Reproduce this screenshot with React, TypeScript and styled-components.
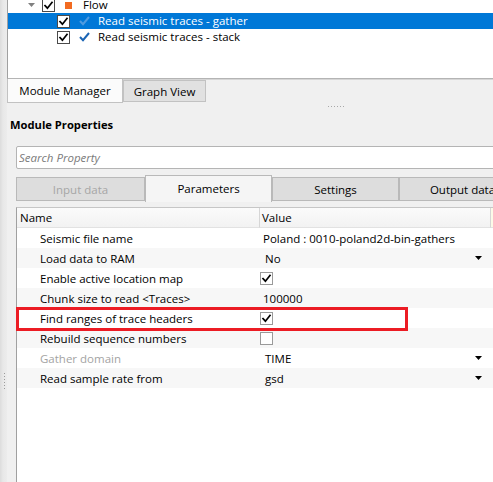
import React from "react";
import styled, { createGlobalStyle } from "styled-components";

const GlobalStyle = createGlobalStyle`
  html, body { margin: 0; padding: 0; background: #f0f0f0; }
  body { font-family: "Open Sans", "Noto Sans", sans-serif; font-size: 11.5px; color: #000; }
  * { box-sizing: border-box; }
`;

const Root = styled.div`
  width: 493px;
  height: 482px;
  overflow: hidden;
  display: flex;
  background: #f0f0f0;
`;

const SideGrip = styled.div`
  width: 7px;
  flex: none;
  background: linear-gradient(to right, #dcdcdc 0, #e8e8e8 3px, #ececec 7px);
  display: flex;
  flex-direction: column;
  align-items: center;
  padding-top: 373px;
  padding-left: 1px;
`;

const GripDots = styled.div`
  width: 1px;
  height: 18px;
  background-image: linear-gradient(to bottom, #9a9a9a 1px, transparent 1px);
  background-size: 1px 3px;
`;

const Main = styled.div`
  width: 620px;
  flex: none;
  display: flex;
  flex-direction: column;
`;

const TreePanel = styled.div`
  height: 79px;
  flex: none;
  background: #fff;
  border-left: 1px solid #a0a0a0;
  border-bottom: 1px solid #b4b4b4;
  box-shadow: 0 1px 0 #d6d6d6;
  overflow: hidden;
`;

const TreeList = styled.div`
  margin-top: -3px;
  display: flex;
  flex-direction: column;
`;

const TreeRow = styled.div<{ $selected?: boolean }>`
  height: 16px;
  display: flex;
  align-items: center;
  background: ${(p) => (p.$selected ? "#0078d7" : "transparent")};
  color: ${(p) => (p.$selected ? "#fff" : "#000")};
`;

const Indent = styled.div<{ $level: number }>`
  flex: none;
  width: ${(p) => 20 + p.$level * 15}px;
`;

const ArrowSlot = styled.div`
  flex: none;
  width: 14px;
  display: flex;
  align-items: center;
`;

const Check = styled.div<{ $dark?: boolean }>`
  flex: none;
  width: 13px;
  height: 13px;
  background: #fff;
  border: 1px solid ${(p) => (p.$dark ? "#4a4a4a" : "#9a9a9a")};
  display: flex;
  align-items: center;
  justify-content: center;
`;

const IconSlot = styled.div`
  flex: none;
  width: 28px;
  padding-left: 9px;
  display: flex;
  align-items: center;
`;

const FlowIcon = styled.div`
  width: 7px;
  height: 7px;
  margin-left: 1px;
  background: #f26b21;
`;

const TreeLabel = styled.span`
  white-space: nowrap;
  line-height: 16px;
`;

const DockTabs = styled.div`
  height: 24px;
  flex: none;
  display: flex;
  align-items: flex-start;
`;

const DockTab = styled.div<{ $active?: boolean; $w: number }>`
  width: ${(p) => p.$w}px;
  height: ${(p) => (p.$active ? 24 : 22)}px;
  margin-top: ${(p) => (p.$active ? 0 : 1)}px;
  background: ${(p) => (p.$active ? "#fbfbfb" : "#e1e1e1")};
  border: 1px solid #c2c2c2;
  border-top: ${(p) => (p.$active ? "none" : "1px solid #c2c2c2")};
  display: flex;
  align-items: center;
  justify-content: center;
  white-space: nowrap;
`;

const Splitter = styled.div`
  height: 10px;
  flex: none;
  padding: 3px 0 0 321px;
`;

const HDots = styled.div`
  width: 17px;
  height: 1px;
  background-image: linear-gradient(to right, #a8a8a8 1px, transparent 1px);
  background-size: 3px 1px;
`;

const Title = styled.div`
  margin-top: 4px;
  padding-left: 3px;
  height: 16px;
  line-height: 16px;
  font-weight: 700;
  font-size: 11.2px;
`;

const Body = styled.div`
  flex: 1;
  display: flex;
  flex-direction: column;
  padding-left: 9px;
`;

const Search = styled.input`
  margin-top: 13px;
  height: 23px;
  width: 100%;
  border: 1px solid #b4b4b4;
  border-radius: 2px;
  background: #fff;
  padding: 0 2px;
  font-family: inherit;
  font-size: 11.5px;
  outline: none;
  &::placeholder {
    font-style: italic;
    color: #7a7a7a;
  }
`;

const TabBar = styled.div`
  margin-top: 6px;
  height: 26px;
  flex: none;
  display: flex;
  align-items: flex-end;
`;

const Tab = styled.div<{ $active?: boolean; $disabled?: boolean; $w: number }>`
  width: ${(p) => p.$w}px;
  flex: none;
  height: ${(p) => (p.$active ? 27 : 24)}px;
  margin-bottom: ${(p) => (p.$active ? -1 : 0)}px;
  background: ${(p) => (p.$active ? "#f5f5f5" : "#dddddd")};
  border: 1px solid #b9b9b9;
  border-bottom: ${(p) => (p.$active ? "none" : "1px solid #b9b9b9")};
  color: ${(p) => (p.$disabled ? "#a6a6a6" : "#000")};
  display: flex;
  align-items: center;
  justify-content: center;
  white-space: nowrap;
  padding-bottom: ${(p) => (p.$active ? 2 : 0)}px;
`;

const Table = styled.div`
  margin-top: 6px;
  flex: 1;
  background: #fff;
  border-left: 1px solid #a0a0a0;
  border-top: 1px solid #c6c6c6;
  display: flex;
  flex-direction: column;
`;

const HeaderRow = styled.div`
  height: 20px;
  flex: none;
  display: grid;
  grid-template-columns: 243px 231px 1fr;
`;

const HeaderCell = styled.div<{ $pad: number; $extra?: boolean }>`
  background: ${(p) => (p.$extra ? "#fcfae8" : "linear-gradient(#fbfbfb, #f2f2f2)")};
  border-right: 1px solid #d6d6d6;
  border-bottom: 1px solid #e2e2e2;
  padding-left: ${(p) => p.$pad}px;
  display: flex;
  align-items: center;
`;

const Row = styled.div<{ $alt?: boolean }>`
  position: relative;
  height: 20px;
  flex: none;
  display: grid;
  grid-template-columns: 243px 231px 1fr;
  background: ${(p) => (p.$alt ? "#f7f7f7" : "#fff")};
`;

const NameCell = styled.div<{ $disabled?: boolean }>`
  padding-left: 23px;
  display: flex;
  align-items: center;
  white-space: nowrap;
  color: ${(p) => (p.$disabled ? "#a3a3a3" : "#000")};
`;

const ValueCell = styled.div<{ $pad: number }>`
  padding-left: ${(p) => p.$pad}px;
  padding-right: 9px;
  display: flex;
  align-items: center;
  justify-content: space-between;
  white-space: nowrap;
`;

const Highlight = styled.div`
  position: absolute;
  z-index: 5;
  left: -1px;
  top: -1px;
  width: 392px;
  height: 24px;
  border: 3px solid #ec1c24;
  pointer-events: none;
`;

const CheckMark = ({ color = "#000" }: { color?: string }) => (
  <svg width="11" height="11" viewBox="0 0 11 11">
    <path d="M2 5.6 L4.4 8.2 L9 2.4" fill="none" stroke={color} strokeWidth="1.7" strokeLinecap="square" />
  </svg>
);

const ModuleCheck = ({ color }: { color: string }) => (
  <svg width="11" height="10" viewBox="0 0 11 10">
    <path d="M1 5 L4 8.2 L10 1" fill="none" stroke={color} strokeWidth="2" />
  </svg>
);

const DownArrow = ({ color = "#000", w = 7 }: { color?: string; w?: number }) => (
  <svg width={w} height="4" viewBox="0 0 7 4">
    <polygon points="0,0 7,0 3.5,4" fill={color} />
  </svg>
);

type Prop = {
  name: string;
  kind: "text" | "combo" | "check";
  value?: string;
  checked?: boolean;
  disabled?: boolean;
  highlight?: boolean;
};

const props: Prop[] = [
  { name: "Seismic file name", kind: "text", value: "Poland : 0010-poland2d-bin-gathers" },
  { name: "Load data to RAM", kind: "combo", value: "No" },
  { name: "Enable active location map", kind: "check", checked: true },
  { name: "Chunk size to read <Traces>", kind: "text", value: "100000" },
  { name: "Find ranges of trace headers", kind: "check", checked: true, highlight: true },
  { name: "Rebuild sequence numbers", kind: "check", checked: false },
  { name: "Gather domain", kind: "combo", value: "TIME", disabled: true },
  { name: "Read sample rate from", kind: "combo", value: "gsd" },
];

export default function App() {
  return (
    <>
      <GlobalStyle />
      <Root>
        <SideGrip>
          <GripDots />
        </SideGrip>
        <Main>
          <TreePanel>
            <TreeList>
              <TreeRow>
                <Indent $level={0} />
                <ArrowSlot>
                  <DownArrow color="#808080" />
                </ArrowSlot>
                <Check $dark>
                  <CheckMark />
                </Check>
                <IconSlot>
                  <FlowIcon />
                </IconSlot>
                <TreeLabel>Flow</TreeLabel>
              </TreeRow>
              <TreeRow $selected>
                <Indent $level={1} />
                <ArrowSlot />
                <Check $dark>
                  <CheckMark />
                </Check>
                <IconSlot>
                  <ModuleCheck color="#4f9be0" />
                </IconSlot>
                <TreeLabel>Read seismic traces - gather</TreeLabel>
              </TreeRow>
              <TreeRow>
                <Indent $level={1} />
                <ArrowSlot />
                <Check $dark>
                  <CheckMark />
                </Check>
                <IconSlot>
                  <ModuleCheck color="#1a64b4" />
                </IconSlot>
                <TreeLabel>Read seismic traces - stack</TreeLabel>
              </TreeRow>
            </TreeList>
          </TreePanel>
          <DockTabs>
            <DockTab $active $w={116}>Module Manager</DockTab>
            <DockTab $w={83}>Graph View</DockTab>
          </DockTabs>
          <Splitter>
            <HDots />
          </Splitter>
          <Title>Module Properties</Title>
          <Body>
            <Search placeholder="Search Property" />
            <TabBar>
              <Tab $disabled $w={129}>Input data</Tab>
              <Tab $active $w={127}>Parameters</Tab>
              <Tab $w={127}>Settings</Tab>
              <Tab $w={127}>Output data</Tab>
            </TabBar>
            <Table>
              <HeaderRow>
                <HeaderCell $pad={3}>Name</HeaderCell>
                <HeaderCell $pad={2}>Value</HeaderCell>
                <HeaderCell $pad={2} $extra />
              </HeaderRow>
              {props.map((p, i) => (
                <Row key={p.name} $alt={i % 2 === 1}>
                  <NameCell $disabled={p.disabled}>{p.name}</NameCell>
                  {p.kind === "text" && <ValueCell $pad={3}>{p.value}</ValueCell>}
                  {p.kind === "combo" && (
                    <ValueCell $pad={5}>
                      <span>{p.value}</span>
                      <DownArrow />
                    </ValueCell>
                  )}
                  {p.kind === "check" && (
                    <ValueCell $pad={0}>
                      <Check>{p.checked && <CheckMark />}</Check>
                    </ValueCell>
                  )}
                  <div />
                  {p.highlight && <Highlight />}
                </Row>
              ))}
            </Table>
          </Body>
        </Main>
      </Root>
    </>
  );
}
